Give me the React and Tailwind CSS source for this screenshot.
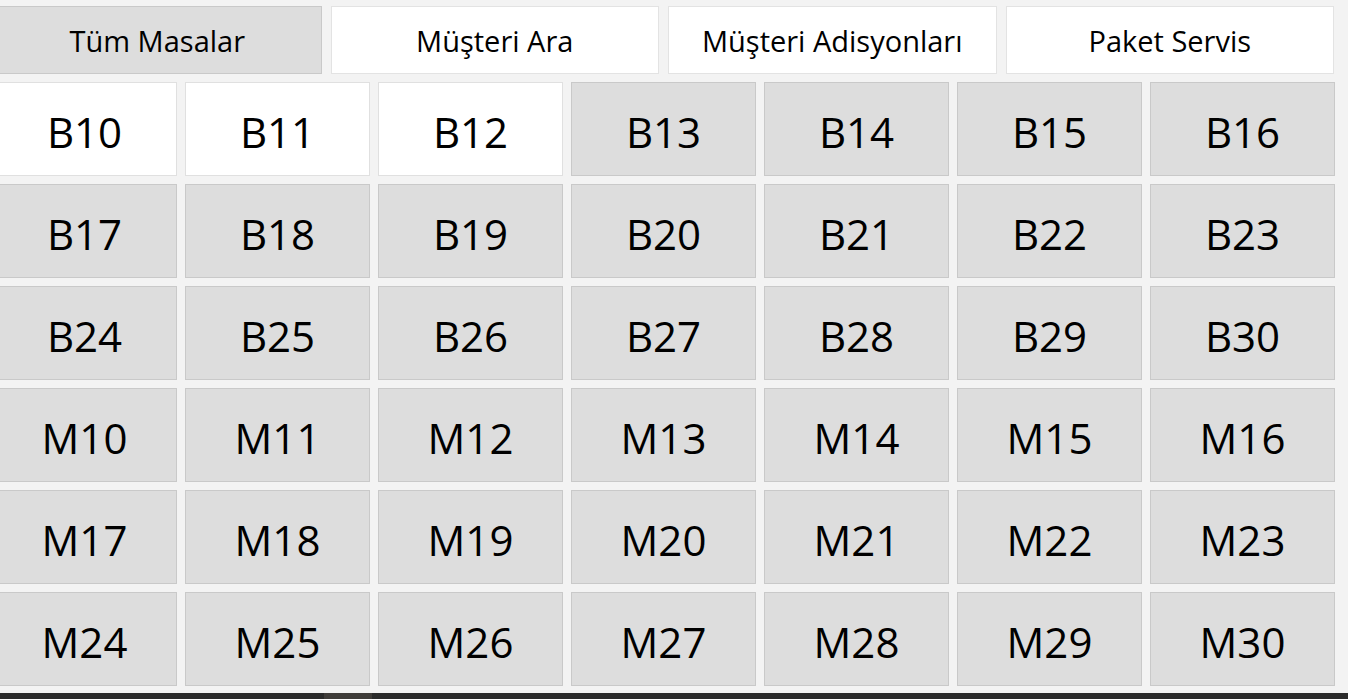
import React from 'react';

const tabs = ['Tüm Masalar', 'Müşteri Ara', 'Müşteri Adisyonları', 'Paket Servis'];

const tables = [
  'B10', 'B11', 'B12', 'B13', 'B14', 'B15', 'B16',
  'B17', 'B18', 'B19', 'B20', 'B21', 'B22', 'B23',
  'B24', 'B25', 'B26', 'B27', 'B28', 'B29', 'B30',
  'M10', 'M11', 'M12', 'M13', 'M14', 'M15', 'M16',
  'M17', 'M18', 'M19', 'M20', 'M21', 'M22', 'M23',
  'M24', 'M25', 'M26', 'M27', 'M28', 'M29', 'M30',
];

// bos masalar beyaz
const freeTables = ['B10', 'B11', 'B12'];

export default function App() {
  return (
    <div className="h-[699px] w-[1348px] overflow-hidden bg-[#f3f3f3] flex flex-col font-['Open_Sans',sans-serif] text-black">
      <div className="flex-1 -ml-[7px] w-[1342px] pt-[6px] flex flex-col gap-2">
        <div className="grid grid-cols-4 gap-[9px] h-[68px] pr-px">
          {tabs.map((tab, i) => (
            <button
              key={tab}
              className={
                i === 0
                  ? 'flex items-center justify-center pt-[1px] border border-[#c9c9c9] bg-[#dddddd] text-[29px]'
                  : 'flex items-center justify-center pt-[1px] border border-[#e3e3e3] bg-white text-[29px]'
              }
            >
              {tab}
            </button>
          ))}
        </div>

        <div className="grid grid-cols-7 grid-rows-6 gap-2 h-[604px] -ml-px">
          {tables.map((name) => (
            <button
              key={name}
              className={
                freeTables.includes(name)
                  ? 'flex items-center justify-center pt-[4px] border border-[#e0e0e0] bg-white text-[42px]'
                  : 'flex items-center justify-center pt-[4px] border border-[#c9c9c9] bg-[#dddddd] text-[42px]'
              }
            >
              {name}
            </button>
          ))}
        </div>
      </div>
      <div className="h-[6px] bg-[#2b2b2b] flex">
        <div className="ml-[324px] w-[48px] bg-[#3f3c39]" />
      </div>
    </div>
  );
}
